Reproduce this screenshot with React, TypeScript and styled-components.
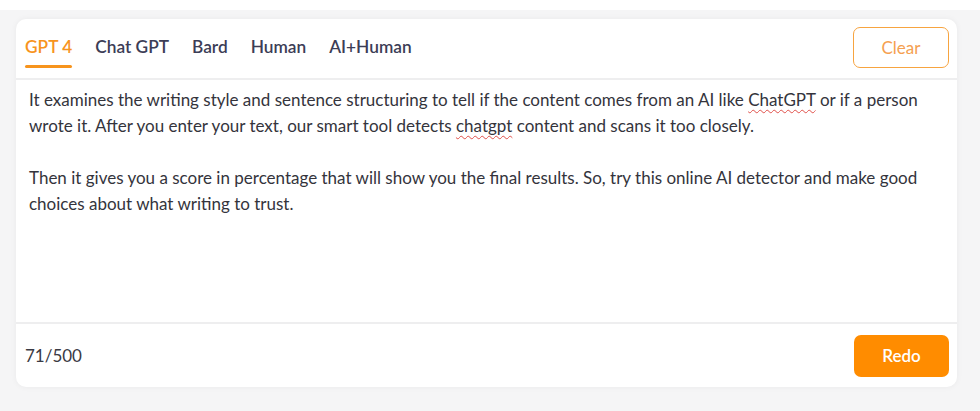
import React, { useState } from 'react'
import styled, { createGlobalStyle } from 'styled-components'

const GlobalStyle = createGlobalStyle`
  html, body {
    margin: 0;
    padding: 0;
    background: #ffffff;
    font-family: Lato, "Open Sans", sans-serif;
  }
`

const Page = styled.div`
  margin-top: 10px;
  height: 401px;
  box-sizing: border-box;
  background: #f5f5f6;
  padding: 9px 23px 0 16px;
`

const Card = styled.div`
  height: 368px;
  background: #ffffff;
  border-radius: 10px;
  box-shadow: 0 0 6px rgba(0, 0, 0, 0.05);
  display: flex;
  flex-direction: column;
`

const Header = styled.div`
  height: 59px;
  display: flex;
  align-items: stretch;
  justify-content: space-between;
  padding: 0 8px 0 8px;
  border-bottom: 2px solid #eeeeef;
`

const Tabs = styled.div`
  display: flex;
  gap: 23px;
  padding-left: 1px;
`

const Tab = styled.button<{ $active?: boolean }>`
  background: none;
  border: none;
  padding: 17px 0 0;
  font-family: Lato, sans-serif;
  font-size: 17.3px;
  font-weight: 600;
  color: ${(p) => (p.$active ? '#f7941d' : '#3c3d56')};
  position: relative;
  cursor: pointer;
  display: flex;
  align-items: flex-start;

  &::after {
    content: '';
    display: ${(p) => (p.$active ? 'block' : 'none')};
    position: absolute;
    left: 0;
    right: 0;
    top: 46px;
    height: 3px;
    border-radius: 2px;
    background: #f7941d;
  }
`

const OutlineButton = styled.button`
  margin-top: 8px;
  width: 96px;
  height: 41px;
  box-sizing: border-box;
  border: 1.5px solid #f7a440;
  border-radius: 7px;
  background: #ffffff;
  color: #f5a050;
  font-family: Lato, sans-serif;
  font-size: 17px;
  cursor: pointer;
`

const Body = styled.div`
  flex: 1;
  padding: 7px 20px 0 13px;
  font-size: 17px;
  line-height: 26px;
  color: #34343c;
`

const Para = styled.p`
  margin: 0 0 26px;
`

const Flagged = styled.span`
  text-decoration: underline wavy #e0504a;
  text-decoration-thickness: 1px;
  text-underline-offset: 3px;
`

const Footer = styled.div`
  height: 63px;
  display: flex;
  align-items: center;
  justify-content: space-between;
  padding: 0 8px 0 9px;
  border-top: 2px solid #eeeeef;
`

const Counter = styled.span`
  font-size: 17px;
  color: #3a3a44;
`

const PrimaryButton = styled.button`
  width: 95px;
  height: 42px;
  border: none;
  border-radius: 7px;
  background: #ff8c00;
  color: #ffffff;
  font-family: Lato, sans-serif;
  font-size: 17px;
  font-weight: 600;
  cursor: pointer;
`

const tabs = ['GPT 4', 'Chat GPT', 'Bard', 'Human', 'AI+Human']

export default function App() {
  const [active, setActive] = useState('GPT 4')

  return (
    <>
      <GlobalStyle />
      <Page>
        <Card>
          <Header>
            <Tabs>
              {tabs.map((t) => (
                <Tab key={t} $active={t === active} onClick={() => setActive(t)}>
                  {t}
                </Tab>
              ))}
            </Tabs>
            <OutlineButton>Clear</OutlineButton>
          </Header>
          <Body>
            <Para>
              It examines the writing style and sentence structuring to tell if the content comes
              from an AI like <Flagged>ChatGPT</Flagged> or if a person wrote it. After you enter
              your text, our smart tool detects <Flagged>chatgpt</Flagged> content and scans it too
              closely.
            </Para>
            <Para>
              Then it gives you a score in percentage that will show you the final results. So, try
              this online AI detector and make good choices about what writing to trust.
            </Para>
          </Body>
          <Footer>
            <Counter>71/500</Counter>
            <PrimaryButton>Redo</PrimaryButton>
          </Footer>
        </Card>
      </Page>
    </>
  )
}
